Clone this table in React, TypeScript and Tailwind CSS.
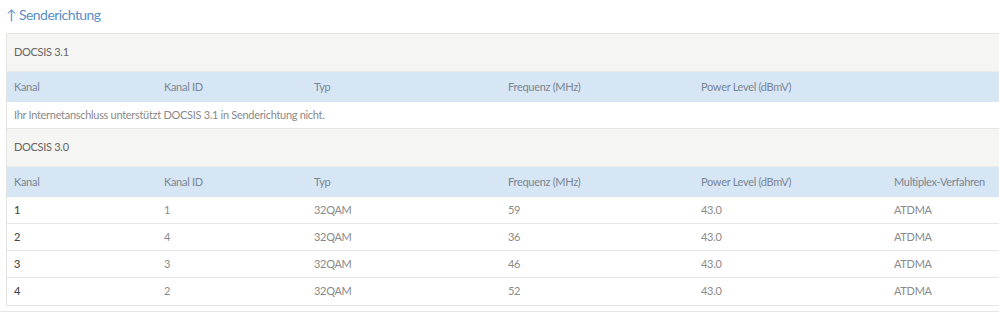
const COLS = "grid grid-cols-[150px_150px_194px_193px_193px_1fr]";

const HEAD = ["Kanal", "Kanal ID", "Typ", "Frequenz (MHz)", "Power Level (dBmV)"];

const ROWS = [
  { kanal: "1", id: "1", typ: "32QAM", freq: "59", power: "43.0", mux: "ATDMA" },
  { kanal: "2", id: "4", typ: "32QAM", freq: "36", power: "43.0", mux: "ATDMA" },
  { kanal: "3", id: "3", typ: "32QAM", freq: "46", power: "43.0", mux: "ATDMA" },
  { kanal: "4", id: "2", typ: "32QAM", freq: "52", power: "43.0", mux: "ATDMA" }
];

function SectionTitle({ label }: { label: string }) {
  return (
    <div className="flex h-[38px] items-center border-b border-[#ebebe8] bg-[#f5f5f3] px-[7px] text-[11px] tracking-[-0.3px] text-[#666]">
      {label}
    </div>
  );
}

function HeaderRow({ cols }: { cols: string[] }) {
  return (
    <div className={`${COLS} h-[30px] items-center bg-[#d7e6f5] px-[7px] text-[11px] tracking-[-0.3px] text-[#7a8591]`}>
      {cols.map((c) => (
        <span key={c}>{c}</span>
      ))}
    </div>
  );
}

export default function App() {
  return (
    <div className="h-[330px] w-[999px] overflow-hidden bg-white font-['Lato','Open_Sans',sans-serif]">
      <div className="border-b border-[#e6e6e6] pb-[5px]">
        <h2 className="px-[6px] pt-[4px] text-[14px] leading-[22px] tracking-[-0.55px] text-[#5b8fc7]">
          ↑ Senderichtung
        </h2>
        <div className="ml-[6px] mt-[7px] w-[1010px] border border-[#e4e4e2]">
          <SectionTitle label="DOCSIS 3.1" />
          <HeaderRow cols={HEAD} />
          <div className="flex h-[27px] items-center border-b border-[#e4e4e2] px-[7px] text-[11px] tracking-[-0.3px] text-[#8a8a8a]">
            Ihr Internetanschluss unterstützt DOCSIS 3.1 in Senderichtung nicht.
          </div>
          <SectionTitle label="DOCSIS 3.0" />
          <HeaderRow cols={[...HEAD, "Multiplex-Verfahren"]} />
          {ROWS.map((r, i) => (
            <div
              key={r.kanal}
              className={`${COLS} h-[27px] items-center px-[7px] text-[11px] tracking-[-0.3px] text-[#8a8a8a] ${
                i < ROWS.length - 1 ? "border-b border-[#e6e6e6]" : ""
              }`}
            >
              <span className="font-medium text-[#444]">{r.kanal}</span>
              <span>{r.id}</span>
              <span>{r.typ}</span>
              <span>{r.freq}</span>
              <span>{r.power}</span>
              <span>{r.mux}</span>
            </div>
          ))}
        </div>
      </div>
    </div>
  );
}
